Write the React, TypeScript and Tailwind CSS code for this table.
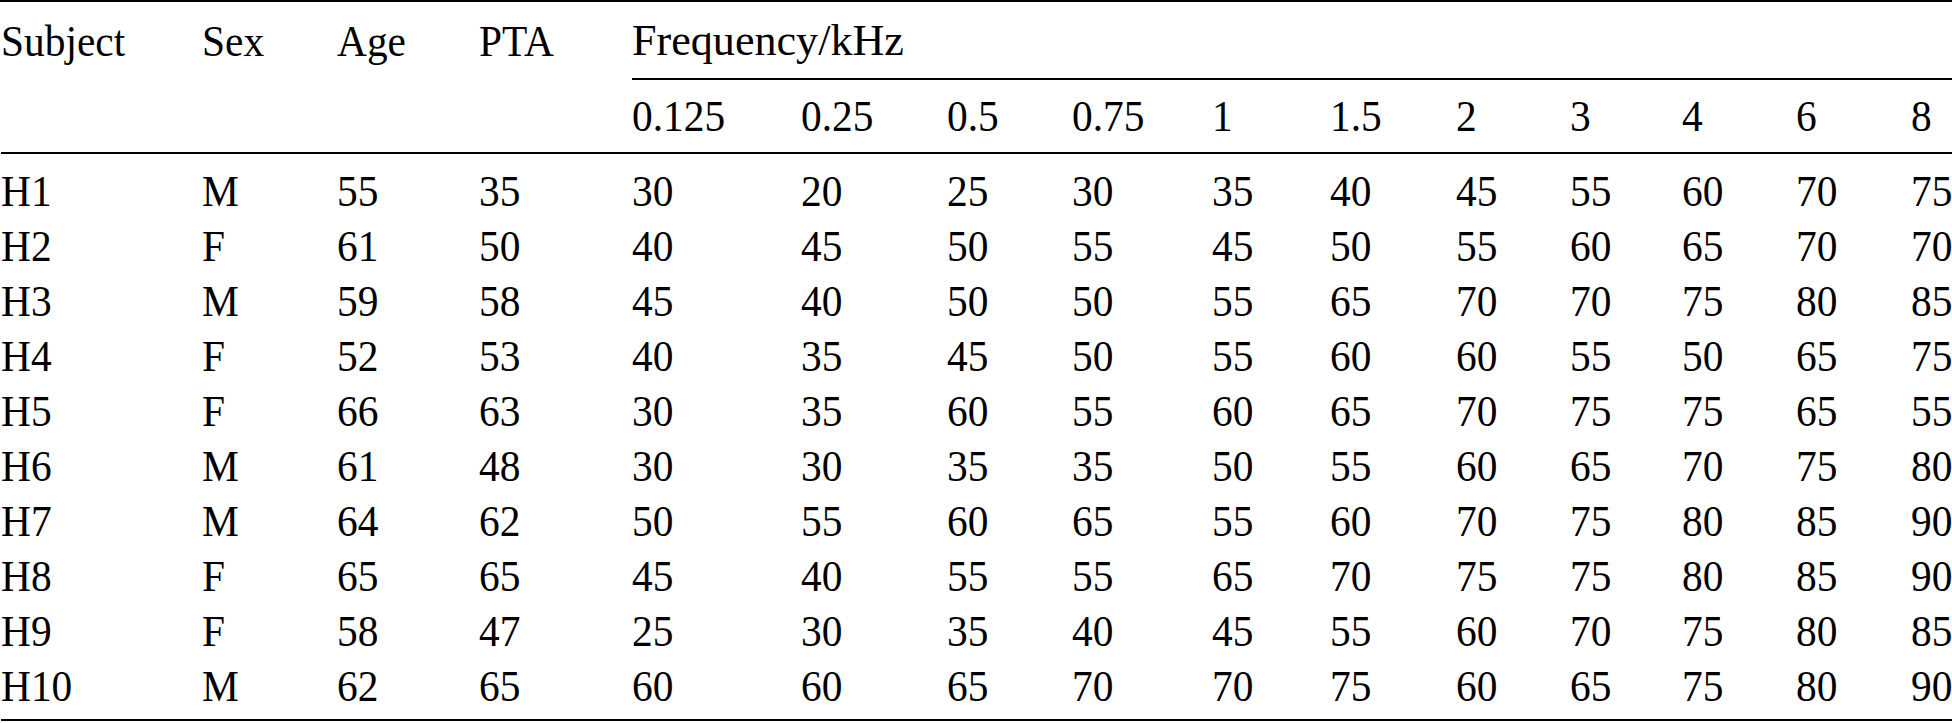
import React from 'react';

const COLS =
    'grid grid-cols-[201px_135px_142px_153px_169px_146px_125px_140px_118px_126px_114px_112px_114px_115px_1fr]';

const FREQS = ['0.125', '0.25', '0.5', '0.75', '1', '1.5', '2', '3', '4', '6', '8'];

const ROWS: string[][] = [
    ['H1', 'M', '55', '35', '30', '20', '25', '30', '35', '40', '45', '55', '60', '70', '75'],
    ['H2', 'F', '61', '50', '40', '45', '50', '55', '45', '50', '55', '60', '65', '70', '70'],
    ['H3', 'M', '59', '58', '45', '40', '50', '50', '55', '65', '70', '70', '75', '80', '85'],
    ['H4', 'F', '52', '53', '40', '35', '45', '50', '55', '60', '60', '55', '50', '65', '75'],
    ['H5', 'F', '66', '63', '30', '35', '60', '55', '60', '65', '70', '75', '75', '65', '55'],
    ['H6', 'M', '61', '48', '30', '30', '35', '35', '50', '55', '60', '65', '70', '75', '80'],
    ['H7', 'M', '64', '62', '50', '55', '60', '65', '55', '60', '70', '75', '80', '85', '90'],
    ['H8', 'F', '65', '65', '45', '40', '55', '55', '65', '70', '75', '75', '80', '85', '90'],
    ['H9', 'F', '58', '47', '25', '30', '35', '40', '45', '55', '60', '70', '75', '80', '85'],
    ['H10', 'M', '62', '65', '60', '60', '65', '70', '70', '75', '60', '65', '75', '80', '90'],
];

// glyphs in the source are a bit narrower than Times, squeeze them
function T({ children }: { children: React.ReactNode }) {
    return <span className="inline-block whitespace-nowrap origin-left scale-x-[0.92]">{children}</span>;
}

export default function App() {
    return (
        <div className="w-full min-h-screen bg-white overflow-hidden font-serif text-[45px] leading-none text-black">
            <div className="border-t-2 border-black pl-[1px] font-['Liberation_Serif']">
                <div className="border-b-2 border-black">
                    <div className={`${COLS} h-[78px]`}>
                        <div className="flex items-center"><T>Subject</T></div>
                        <div className="flex items-center"><T>Sex</T></div>
                        <div className="flex items-center"><T>Age</T></div>
                        <div className="flex items-center"><T>PTA</T></div>
                        <div className="col-span-11 flex items-center border-b-2 border-black">
                            <span className="inline-block whitespace-nowrap origin-left scale-x-[0.98]">Frequency/kHz</span>
                        </div>
                    </div>
                    <div className={`${COLS} h-[72px]`}>
                        <div />
                        <div />
                        <div />
                        <div />
                        {FREQS.map((f) => (
                            <div key={f} className="flex items-center"><T>{f}</T></div>
                        ))}
                    </div>
                </div>
                <div className="pt-[10px] pb-[5px] border-b-2 border-black">
                    {ROWS.map((r) => (
                        <div key={r[0]} className={`${COLS} h-[55px]`}>
                            {r.map((v, i) => (
                                <div key={i} className="flex items-center"><T>{v}</T></div>
                            ))}
                        </div>
                    ))}
                </div>
            </div>
        </div>
    );
}
